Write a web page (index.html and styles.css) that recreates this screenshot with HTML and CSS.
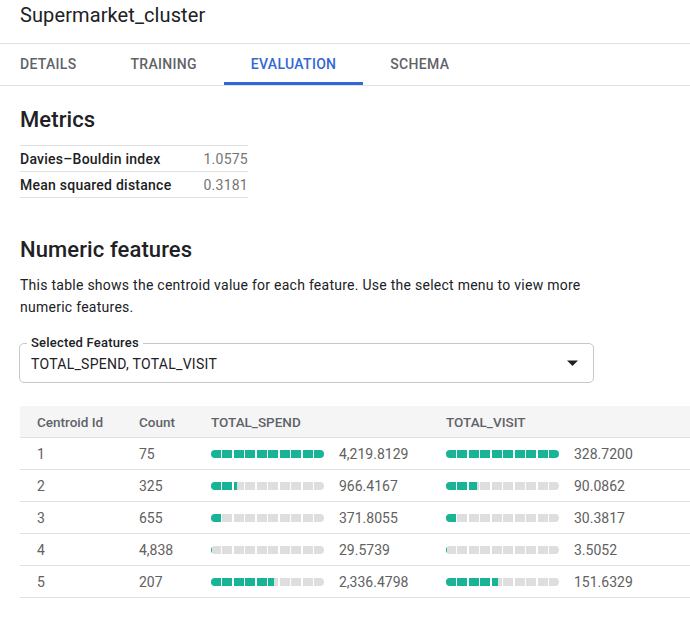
FILE: index.html
```html
<!DOCTYPE html>
<html lang="en">
<head>
<meta charset="utf-8">
<title>Supermarket_cluster</title>
<link rel="stylesheet" href="styles.css">
</head>
<body>
<header class="header">
  <h1 class="title">Supermarket_cluster</h1>
</header>
<nav class="tabs">
  <div class="tab">DETAILS</div>
  <div class="tab">TRAINING</div>
  <div class="tab active">EVALUATION</div>
  <div class="tab">SCHEMA</div>
</nav>
<main class="content">
  <h2 class="section-title">Metrics</h2>
  <div class="metrics">
    <div class="metric-row"><span class="metric-label">Davies–Bouldin index</span><span class="metric-value">1.0575</span></div>
    <div class="metric-row"><span class="metric-label">Mean squared distance</span><span class="metric-value">0.3181</span></div>
  </div>

  <h2 class="section-title numeric-title">Numeric features</h2>
  <p class="desc">This table shows the centroid value for each feature. Use the select menu to view more numeric features.</p>

  <div class="select">
    <span class="select-label">Selected Features</span>
    <span class="select-value">TOTAL_SPEND, TOTAL_VISIT</span>
    <svg class="select-arrow" width="11" height="6" viewBox="0 0 11 6"><path d="M0 0.5h11L5.5 6z" fill="#202124"/></svg>
  </div>

  <div class="table-wrap">
    <div class="trow thead">
      <div class="c c-id">Centroid Id</div>
      <div class="c c-count">Count</div>
      <div class="c c-spend">TOTAL_SPEND</div>
      <div class="c c-visit">TOTAL_VISIT</div>
    </div>
    <div class="trow">
      <div class="c c-id">1</div>
      <div class="c c-count">75</div>
      <div class="c c-spend"><span class="bar"><span class="fill" style="width:100%"></span></span><span class="val">4,219.8129</span></div>
      <div class="c c-visit"><span class="bar"><span class="fill" style="width:100%"></span></span><span class="val">328.7200</span></div>
    </div>
    <div class="trow">
      <div class="c c-id">2</div>
      <div class="c c-count">325</div>
      <div class="c c-spend"><span class="bar"><span class="fill" style="width:22.9%"></span></span><span class="val">966.4167</span></div>
      <div class="c c-visit"><span class="bar"><span class="fill" style="width:27.4%"></span></span><span class="val">90.0862</span></div>
    </div>
    <div class="trow">
      <div class="c c-id">3</div>
      <div class="c c-count">655</div>
      <div class="c c-spend"><span class="bar"><span class="fill" style="width:8.8%"></span></span><span class="val">371.8055</span></div>
      <div class="c c-visit"><span class="bar"><span class="fill" style="width:9.2%"></span></span><span class="val">30.3817</span></div>
    </div>
    <div class="trow">
      <div class="c c-id">4</div>
      <div class="c c-count">4,838</div>
      <div class="c c-spend"><span class="bar"><span class="fill" style="width:0.7%"></span></span><span class="val">29.5739</span></div>
      <div class="c c-visit"><span class="bar"><span class="fill" style="width:1.1%"></span></span><span class="val">3.5052</span></div>
    </div>
    <div class="trow">
      <div class="c c-id">5</div>
      <div class="c c-count">207</div>
      <div class="c c-spend"><span class="bar"><span class="fill" style="width:55.4%"></span></span><span class="val">2,336.4798</span></div>
      <div class="c c-visit"><span class="bar"><span class="fill" style="width:46.1%"></span></span><span class="val">151.6329</span></div>
    </div>
  </div>
</main>
</body>
</html>
```

FILE: styles.css
```css
html, body {
  margin: 0;
  padding: 0;
  overflow: hidden;
  background: #fff;
}
body {
  font-family: Roboto, "Liberation Sans", Arial, sans-serif;
  color: #202124;
  width: 690px;
}
.header {
  border-bottom: 1px solid #e0e0e0;
  padding: 3px 20px 0;
  box-sizing: border-box;
  height: 44px;
}
.title {
  margin: 0;
  font-size: 20px;
  line-height: 24px;
  font-weight: 400;
  letter-spacing: 0.1px;
  color: #202124;
}
.tabs {
  display: flex;
  height: 41px;
  border-bottom: 1px solid #e0e0e0;
}
.tab {
  padding: 10px 27px 0;
  font-size: 14px;
  line-height: 20px;
  font-weight: 500;
  letter-spacing: 0.3px;
  color: #5f6368;
  box-sizing: border-box;
  height: 41px;
  border-bottom: 3px solid transparent;
}
.tab:first-child {
  padding-left: 20px;
}
.tab.active {
  color: #3367d6;
  border-bottom-color: #3367d6;
}
.content {
  padding: 20px 0 0 20px;
}
.section-title {
  margin: 0;
  font-size: 22px;
  line-height: 28px;
  font-weight: 500;
  letter-spacing: 0.1px;
  color: #202124;
}
.metrics {
  margin-top: 11px;
  width: 228px;
  border-top: 1px solid #e0e0e0;
}
.metric-row {
  display: flex;
  justify-content: space-between;
  align-items: center;
  height: 25px;
  border-bottom: 1px solid #e0e0e0;
  font-size: 14px;
  letter-spacing: 0.25px;
}
.metric-label {
  font-weight: 500;
  color: #202124;
}
.metric-value {
  color: #757575;
}
.numeric-title {
  margin-top: 38px;
}
.desc {
  margin: 10px 0 0;
  width: 575px;
  font-size: 14px;
  line-height: 22px;
  letter-spacing: 0.26px;
  color: #202124;
}
.select {
  position: relative;
  margin: 25px 0 0 -1px;
  width: 575px;
  height: 40px;
  box-sizing: border-box;
  border: 1px solid #c8c8c8;
  border-radius: 5px;
  display: flex;
  align-items: center;
  padding: 0 15px 0 11px;
}
.select-label {
  position: absolute;
  left: 7px;
  top: -10px;
  padding: 0 4px;
  background: #fff;
  font-size: 13px;
  line-height: 17px;
  font-weight: 500;
  letter-spacing: 0.2px;
  color: #202124;
}
.select-value {
  flex: 1;
  font-size: 14px;
  line-height: 20px;
  letter-spacing: 0.28px;
  color: #202124;
  padding-top: 1px;
}
.select-arrow {
  display: block;
}
.table-wrap {
  margin-top: 23px;
  width: 700px;
}
.trow {
  display: flex;
  height: 32px;
  box-sizing: border-box;
  border-bottom: 1px solid #e0e0e0;
  align-items: center;
  font-size: 14px;
  color: #616161;
}
.thead {
  background: #f5f5f5;
  font-weight: 500;
  color: #5f6368;
  font-size: 13.5px;
}
.c {
  padding-left: 17px;
  box-sizing: border-box;
  display: flex;
  align-items: center;
  white-space: nowrap;
}
.c-id { width: 102px; }
.c-count { width: 72px; }
.c-spend { width: 235px; }
.c-visit { width: 223px; }
.bar {
  position: relative;
  display: block;
  width: 113px;
  height: 8px;
  border-radius: 4px;
  background: #dedede;
  overflow: hidden;
  margin-right: 15px;
  flex: none;
}
.bar::after {
  content: "";
  position: absolute;
  inset: 0;
  background: repeating-linear-gradient(90deg, transparent 0, transparent 9.95px, #fff 9.95px, #fff 11.45px);
}
.fill {
  display: block;
  height: 100%;
  min-width: 1px;
  background: #17b596;
}
.val {
  color: #616161;
}
```
